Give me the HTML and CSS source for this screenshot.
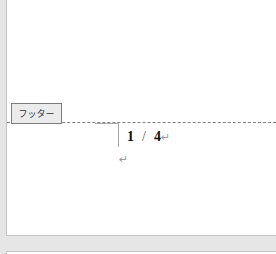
FILE: index.html
```html
<!DOCTYPE html>
<html lang="ja">
<head>
    <meta charset="UTF-8">
    <title>フッター</title>
    <link rel="stylesheet" href="styles.css">
</head>
<body>
<div class="page">
    <div class="footer">
        <span class="footer-tab">フッター</span>
        <span class="corner"></span>
        <p class="line first"><b>1</b>&nbsp;&nbsp;<span class="slash">/</span>&nbsp;&nbsp;<b>4</b><span class="mark">↵</span></p>
        <p class="line"><span class="mark">↵</span></p>
    </div>
</div>
<div class="page next"></div>
</body>
</html>
```

FILE: styles.css
```css
*{
    margin: 0;
    padding: 0;
}
body{
    background: #e6e6e6;
    font-family: "Liberation Serif", "Noto Sans CJK JP", serif;
    overflow: hidden;
}
.page{
    margin-left: 6px;
    height: 236px;
    box-sizing: border-box;
    padding-top: 122px;
    background: #fff;
    border-left: 1px solid #c4c4c4;
    border-bottom: 1px solid #c4c4c4;
}
.page.next{
    margin-top: 15px;
    padding-top: 0;
    height: 3px;
    border-bottom: none;
    border-top: 1px solid #c4c4c4;
}
.footer{
    position: relative;
    border-top: 1px dashed #808080;
    padding: 3px 0 0 112px;
}
.footer-tab{
    position: absolute;
    left: 4px;
    bottom: 100%;
    margin-bottom: -1px;
    width: 49px;
    height: 19px;
    line-height: 19px;
    text-align: center;
    font-family: "Noto Sans CJK JP", sans-serif;
    font-size: 9px;
    color: #333;
    background: #ebebeb;
    border: 1px solid #7c7c7c;
}
.corner{
    position: absolute;
    left: 88px;
    top: 0;
    width: 23px;
    height: 23px;
    border-top: 1px solid #a8a8a8;
    border-right: 1px solid #a8a8a8;
}
.line{
    font-size: 14px;
    line-height: 21px;
    color: #111;
    white-space: nowrap;
}
.line.first{
    text-indent: 8px;
}
.slash{
    margin: 0 1px;
    color: #555;
}
.mark{
    font-family: "DejaVu Sans", sans-serif;
    font-size: 11px;
    color: #9a9a9a;
}
```
